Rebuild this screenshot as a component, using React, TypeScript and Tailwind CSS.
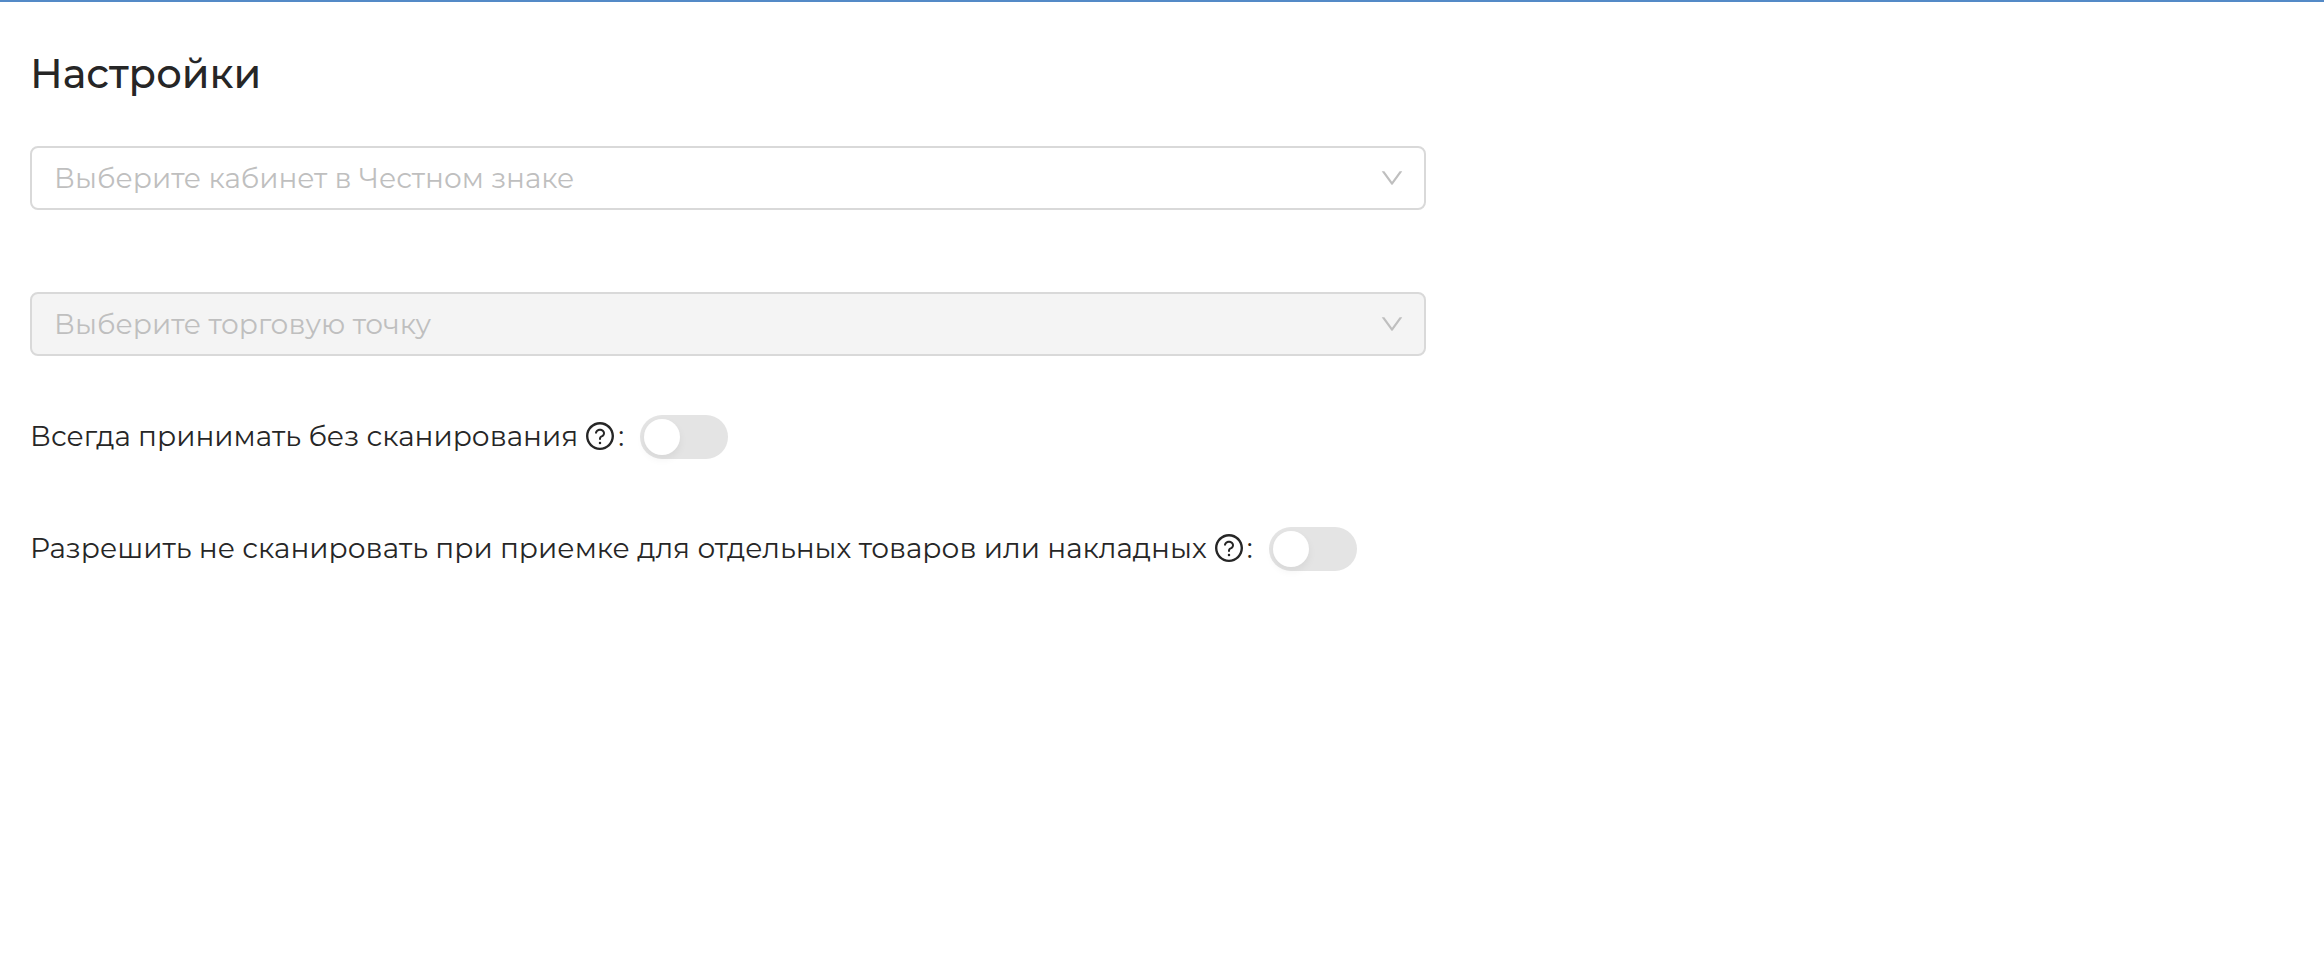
import React, { useState } from "react";

interface SelectFieldProps {
  id: string;
  placeholder: string;
  options: string[];
  disabled?: boolean;
  value: string;
  onChange: (value: string) => void;
}

function SelectField({ id, placeholder, options, disabled, value, onChange }: SelectFieldProps) {
  return (
    <div className="grid items-center">
      <select
        id={id}
        aria-label={placeholder}
        disabled={disabled}
        value={value}
        onChange={(e) => onChange(e.target.value)}
        className="col-start-1 row-start-1 h-16 w-full appearance-none rounded-lg border-2 border-[#d9d9d9] bg-white pl-[22px] pr-16 text-[28px] text-[#bfbfbf] opacity-100 outline-none disabled:cursor-not-allowed disabled:bg-[#f4f4f4]"
      >
        <option value="">{placeholder}</option>
        {options.map((option) => (
          <option key={option} value={option}>
            {option}
          </option>
        ))}
      </select>
      <svg
        viewBox="64 64 896 896"
        className="pointer-events-none col-start-1 row-start-1 mr-[22px] size-6 justify-self-end fill-[#bfbfbf]"
        aria-hidden="true"
      >
        <path d="M884 256h-75c-5.1 0-9.9 2.5-12.9 6.6L512 654.2 227.9 262.6c-3-4.1-7.8-6.6-12.9-6.6h-75c-6.5 0-10.3 7.4-6.5 12.7l352.6 486.1c12.8 17.6 39 17.6 51.7 0l352.6-486.1c3.9-5.3.1-12.7-6.4-12.7z" />
      </svg>
    </div>
  );
}

interface SwitchRowProps {
  id: string;
  label: string;
  checked: boolean;
  onChange: (checked: boolean) => void;
}

function SwitchRow({ id, label, checked, onChange }: SwitchRowProps) {
  return (
    <div className="flex items-start">
      <div className="flex items-center text-[28px] leading-[42px]">
        <label htmlFor={id}>{label}</label>
        <button type="button" aria-label="Подсказка" className="ml-2 mr-1 shrink-0 cursor-pointer">
          <svg viewBox="64 64 896 896" className="size-7 fill-current" aria-hidden="true">
            <path d="M512 64C264.6 64 64 264.6 64 512s200.6 448 448 448 448-200.6 448-448S759.4 64 512 64zm0 820c-205.4 0-372-166.6-372-372s166.6-372 372-372 372 166.6 372 372-166.6 372-372 372z" />
            <path d="M623.6 316.7C593.6 290.4 554 276 512 276s-81.6 14.5-111.6 40.7C369.2 344 352 380.7 352 420v7.6c0 4.4 3.6 8 8 8h48c4.4 0 8-3.6 8-8V420c0-44.1 43.1-80 96-80s96 35.9 96 80c0 31.1-22 59.6-56.1 72.7-21.2 8.1-39.2 22.3-52.1 40.9-13.1 19-19.9 41.8-19.9 64.9V620c0 4.4 3.6 8 8 8h48c4.4 0 8-3.6 8-8v-22.7a48.3 48.3 0 0130.9-44.8c59-22.7 97.1-74.7 97.1-132.5.1-39.3-17.1-76-48.3-103.3zM472 732a40 40 0 1080 0 40 40 0 10-80 0z" />
          </svg>
        </button>
        <span>:</span>
      </div>
      <input
        id={id}
        type="checkbox"
        role="switch"
        checked={checked}
        onChange={(e) => onChange(e.target.checked)}
        className="ml-4 flex h-11 w-[88px] shrink-0 cursor-pointer appearance-none items-center rounded-full bg-[#e4e4e4] p-1 before:size-9 before:rounded-full before:bg-white before:shadow-[0_4px_8px_rgba(0,0,0,0.06)] before:content-[''] checked:justify-end checked:bg-[#548ac7]"
      />
    </div>
  );
}

export default function App() {
  const [cabinet, setCabinet] = useState("");
  const [outlet, setOutlet] = useState("");
  const [skipScan, setSkipScan] = useState(false);
  const [allowPartial, setAllowPartial] = useState(false);

  return (
    <main className="min-h-screen border-t-2 border-[#548ac7] bg-white px-[30px] pt-12 font-[Montserrat,Inter,sans-serif] text-[#262626]">
      <h1 className="text-[40px] leading-[48px] font-medium">Настройки</h1>

      <form className="mt-12 flex max-w-[1396px] flex-col">
        <div className="flex flex-col gap-[82px]">
          <SelectField
            id="cabinet"
            placeholder="Выберите кабинет в Честном знаке"
            options={[]}
            value={cabinet}
            onChange={setCabinet}
          />
          <SelectField
            id="outlet"
            placeholder="Выберите торговую точку"
            options={[]}
            disabled={!cabinet}
            value={outlet}
            onChange={setOutlet}
          />
        </div>

        <div className="mt-[59px] flex flex-col gap-[68px]">
          <SwitchRow
            id="skip-scan"
            label="Всегда принимать без сканирования"
            checked={skipScan}
            onChange={setSkipScan}
          />
          <SwitchRow
            id="allow-partial"
            label="Разрешить не сканировать при приемке для отдельных товаров или накладных"
            checked={allowPartial}
            onChange={setAllowPartial}
          />
        </div>
      </form>
    </main>
  );
}
